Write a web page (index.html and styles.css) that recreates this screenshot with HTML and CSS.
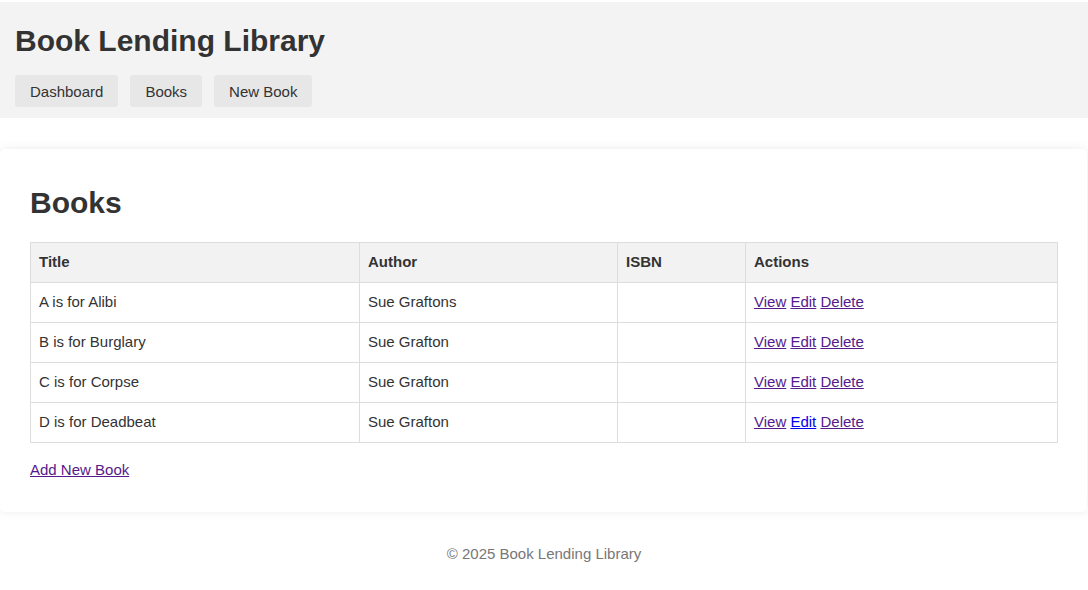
FILE: index.html
```html
<!DOCTYPE html>
<html lang="en">
<head>
<meta charset="utf-8">
<title>Books - Book Lending Library</title>
<link rel="stylesheet" href="styles.css">
</head>
<body>
<header class="site-header">
  <h1 class="site-title">Book Lending Library</h1>
  <nav class="nav">
    <a class="nav-btn" href="#">Dashboard</a>
    <a class="nav-btn" href="#">Books</a>
    <a class="nav-btn" href="#">New Book</a>
  </nav>
</header>
<main class="card">
  <h2 class="page-title">Books</h2>
  <table class="books">
    <colgroup>
      <col class="c-title">
      <col class="c-author">
      <col class="c-isbn">
      <col class="c-actions">
    </colgroup>
    <thead>
      <tr><th>Title</th><th>Author</th><th>ISBN</th><th>Actions</th></tr>
    </thead>
    <tbody>
      <tr><td>A is for Alibi</td><td>Sue Graftons</td><td></td><td><a class="visited" href="#">View</a> <a class="visited" href="#">Edit</a> <a class="visited" href="#">Delete</a></td></tr>
      <tr><td>B is for Burglary</td><td>Sue Grafton</td><td></td><td><a class="visited" href="#">View</a> <a class="visited" href="#">Edit</a> <a class="visited" href="#">Delete</a></td></tr>
      <tr><td>C is for Corpse</td><td>Sue Grafton</td><td></td><td><a class="visited" href="#">View</a> <a class="visited" href="#">Edit</a> <a class="visited" href="#">Delete</a></td></tr>
      <tr><td>D is for Deadbeat</td><td>Sue Grafton</td><td></td><td><a class="visited" href="#">View</a> <a class="fresh" href="#">Edit</a> <a class="visited" href="#">Delete</a></td></tr>
    </tbody>
  </table>
  <p class="add"><a class="visited" href="#">Add New Book</a></p>
</main>
<footer class="footer">© 2025 Book Lending Library</footer>
</body>
</html>
```
FILE: styles.css
```css
html, body {
  margin: 0;
  padding: 0;
  background: #fff;
}
body {
  font-family: "Liberation Sans", Arial, sans-serif;
  color: #333;
  font-size: 15px;
}
.site-header {
  margin-top: 2px;
  background: #f3f3f3;
  padding: 22px 15px 11px;
}
.site-title {
  margin: 0 0 17px;
  font-size: 30px;
  line-height: 34px;
  font-weight: bold;
  color: #333;
}
.nav {
  display: flex;
  gap: 12px;
}
.nav-btn {
  display: block;
  height: 32px;
  line-height: 33px;
  padding: 0 15px;
  background: #e7e7e7;
  border-radius: 3px;
  color: #333;
  text-decoration: none;
  font-size: 15px;
}
.card {
  display: block;
  margin: 31px 1px 0 0;
  background: #fff;
  border-radius: 5px;
  box-shadow: 0 0 10px rgba(0, 0, 0, 0.08);
  padding: 30px 31px 30px 30px;
}
.page-title {
  margin: 7px 0 22px;
  font-size: 30px;
  line-height: 34px;
  font-weight: bold;
  color: #333;
}
.books {
  width: 100%;
  border-collapse: collapse;
  table-layout: fixed;
}
.c-title { width: 329px; }
.c-author { width: 258px; }
.c-isbn { width: 128px; }
.c-actions { width: 312px; }
.books th,
.books td {
  border: 1px solid #ddd;
  padding: 10px 8px 12px;
  line-height: 17px;
  text-align: left;
  font-size: 15px;
  vertical-align: top;
}
.books th {
  background: #f2f2f2;
  font-weight: bold;
}
.visited { color: #551a8b; }
.fresh { color: #0000ee; }
.add {
  margin: 18px 0 4px;
  line-height: 17px;
}
.footer {
  text-align: center;
  color: #777;
  padding: 33px 0 20px;
  line-height: 17px;
}
```
